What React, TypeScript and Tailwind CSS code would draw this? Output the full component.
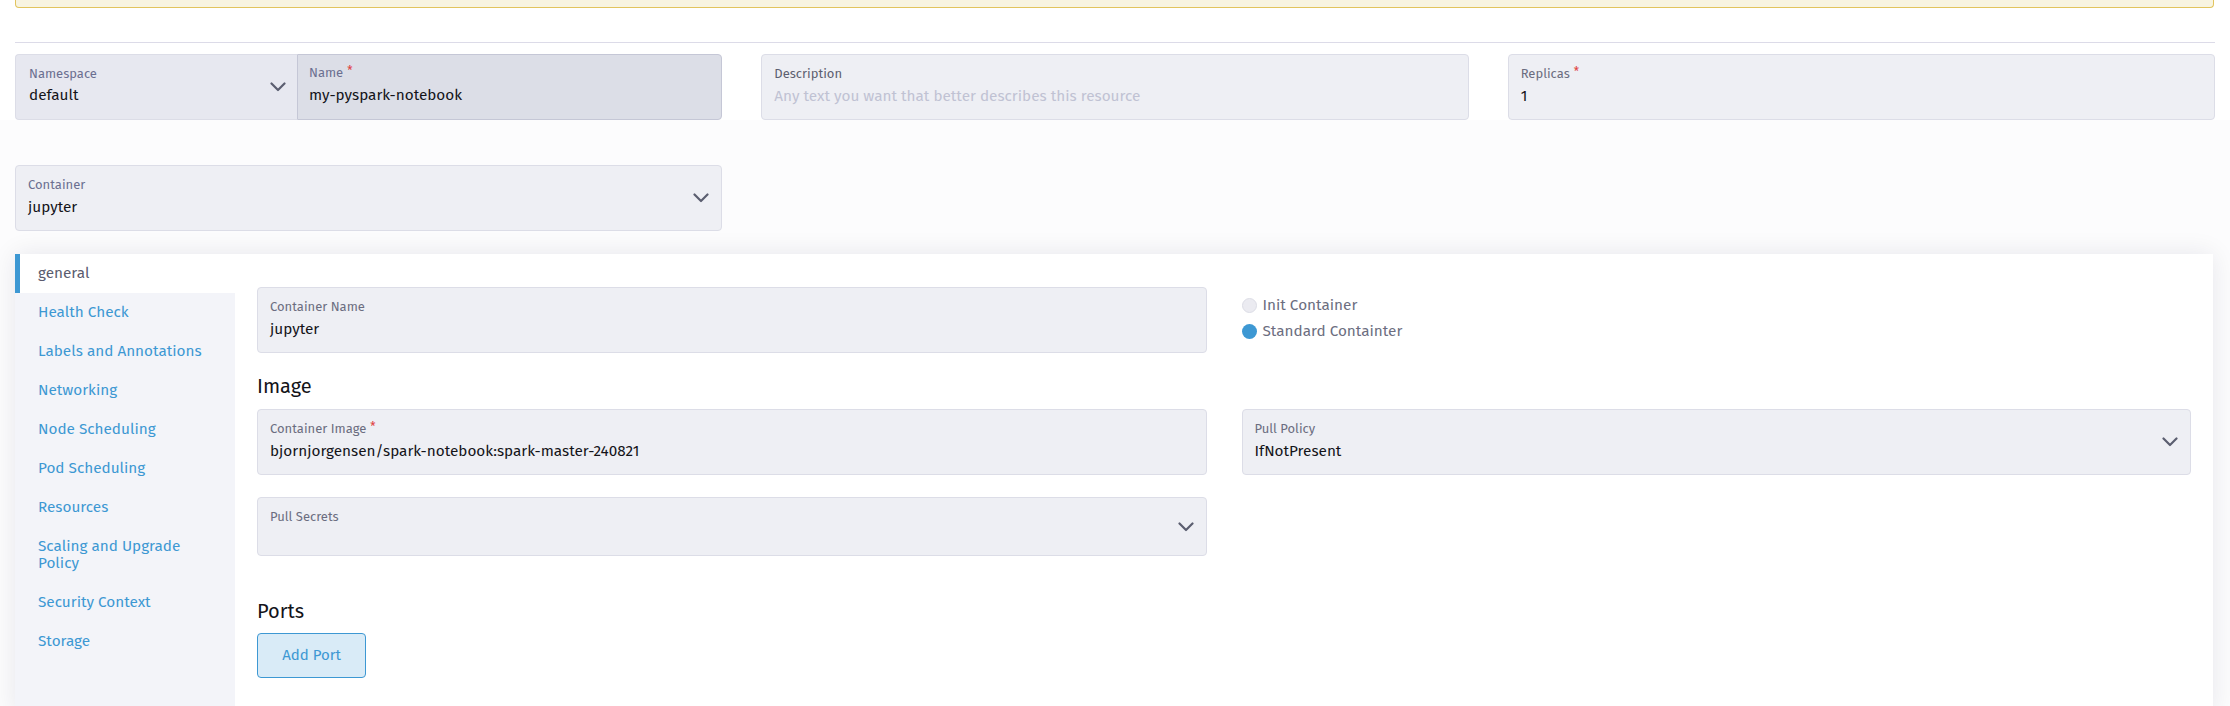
import React from "react";

const FONT = { fontFamily: '"Fira Sans", "Open Sans", "Noto Sans", sans-serif' };

function Chevron({ className = "" }: { className?: string }) {
  return (
    <svg width="16" height="10" viewBox="0 0 16 10" className={className} fill="none">
      <path d="M1.5 1.5 L8 8 L14.5 1.5" stroke="#5b5e70" strokeWidth="2.2" strokeLinecap="round" strokeLinejoin="round" />
    </svg>
  );
}

function Req() {
  return <span className="ml-[4px] text-[#e0403f] text-[12px] leading-[12px] relative top-[-2px]">*</span>;
}

function Field({
  label,
  value,
  placeholder,
  required,
  select,
  className = "",
  h = "h-[66px]",
  labelColor = "text-[#6b6d80]",
}: {
  label: string;
  value?: string;
  placeholder?: string;
  required?: boolean;
  select?: boolean;
  className?: string;
  h?: string;
  labelColor?: string;
}) {
  return (
    <div className={`relative ${h} rounded-[4px] border border-[#dcdde7] bg-[#eeeff4] pl-[12px] pt-[11px] ${className}`}>
      <div className={`text-[13px] leading-[16px] ${labelColor} flex items-center`}>
        {label}
        {required && <Req />}
      </div>
      {value !== undefined && (
        <div className="mt-[4px] text-[15.3px] leading-[20px] text-[#141419]">{value}</div>
      )}
      {placeholder !== undefined && (
        <div className="mt-[4px] text-[15.3px] leading-[20px] text-[#c0c2d3]">{placeholder}</div>
      )}
      {select && (
        <div className="absolute right-[12px] top-0 bottom-0 flex items-center">
          <Chevron />
        </div>
      )}
    </div>
  );
}

const navItems = [
  "Health Check",
  "Labels and Annotations",
  "Networking",
  "Node Scheduling",
  "Pod Scheduling",
  "Resources",
  "Scaling and Upgrade Policy",
  "Security Context",
  "Storage",
];

export default function App() {
  return (
    <div className="min-h-[706px] bg-[#fcfcfd] overflow-hidden" style={FONT}>
      {/* Top white area */}
      <div className="bg-white px-[15px] pb-0">
        <div className="h-[8px] rounded-b-[4px] border border-t-0 border-[#e2c45e] bg-[#f8f4e1] mr-[1px]" />
        <div className="mt-[34px] h-px bg-[#dcdbe8]" />
        <div className="mt-[11px] grid grid-cols-3 gap-[39px]">
          <div className="flex h-[66px]">
            <div className="relative w-[282px] rounded-l-[4px] border border-r-0 border-[#dcdde7] bg-[#e7e8f0] pl-[13px] pt-[11px]">
              <div className="text-[13px] leading-[16px] text-[#6b6f91]">Namespace</div>
              <div className="mt-[3px] text-[15.3px] leading-[20px] text-[#141419]">default</div>
              <div className="absolute right-[11px] top-0 bottom-0 flex items-center">
                <Chevron />
              </div>
            </div>
            <div className="flex-1 rounded-r-[4px] border border-[#c5c7d6] bg-[#dcdee7] pl-[11px] pt-[10px]">
              <div className="text-[13px] leading-[16px] text-[#6b6f91] flex items-center">
                Name
                <Req />
              </div>
              <div className="mt-[4px] text-[15.3px] leading-[20px] text-[#141419]">my-pyspark-notebook</div>
            </div>
          </div>
          <Field
            label="Description"
            placeholder="Any text you want that better describes this resource"
            labelColor="text-[#5d5f70]"
          />
          <Field label="Replicas" value="1" required />
        </div>
      </div>

      {/* Container select */}
      <div className="px-[15px] pt-[45px]">
        <div className="grid grid-cols-3 gap-[39px]">
          <Field label="Container" value="jupyter" select labelColor="text-[#6b6f91]" />
        </div>
      </div>

      {/* Tabbed panel */}
      <div className="ml-[15px] mr-[17px] mt-[23px] flex bg-white shadow-[0_0_24px_rgba(20,20,60,0.09)] min-h-[460px]">
        <div className="w-[220px] shrink-0 bg-[#f3f4f9]">
          <div className="border-l-[5px] border-[#3d98d3] bg-white pl-[18px] py-[11px] text-[15.3px] leading-[17px] text-[#5a5c6e]">
            general
          </div>
          {navItems.map((n) => (
            <div key={n} className="pl-[23px] pr-[20px] py-[11px] text-[15.3px] leading-[17px] text-[#3d98d3]">
              {n}
            </div>
          ))}
        </div>
        <div className="flex-1 px-[22px] pt-[33px] pb-[30px]">
          <div className="grid grid-cols-2 gap-[35px]">
            <Field label="Container Name" value="jupyter" />
            <div className="pt-[9px] flex flex-col gap-[8px]">
              <div className="flex items-center h-[18px]">
                <span className="w-[15px] h-[15px] rounded-full border border-[#dcdde6] bg-[#ebebf1]" />
                <span className="ml-[6px] text-[15.3px] leading-[18px] text-[#6c6e80]">Init Container</span>
              </div>
              <div className="flex items-center h-[18px]">
                <span className="w-[15px] h-[15px] rounded-full bg-[#3d98d3]" />
                <span className="ml-[6px] text-[15.3px] leading-[18px] text-[#6c6e80]">Standard Containter</span>
              </div>
            </div>
          </div>

          <div className="mt-[21px] text-[20px] leading-[24px] text-[#141419]">Image</div>

          <div className="mt-[11px] grid grid-cols-2 gap-[35px]">
            <Field label="Container Image" value="bjornjorgensen/spark-notebook:spark-master-240821" required />
            <Field label="Pull Policy" value="IfNotPresent" select />
          </div>

          <div className="mt-[22px] grid grid-cols-2 gap-[35px]">
            <Field label="Pull Secrets" select h="h-[59px]" />
          </div>

          <div className="mt-[43px] text-[20px] leading-[24px] text-[#141419]">Ports</div>

          <button className="mt-[10px] h-[45px] w-[109px] rounded-[4px] border border-[#3d98d3] bg-[#d9ebf7] text-[15px] text-[#3d98d3]">
            Add Port
          </button>
        </div>
      </div>
    </div>
  );
}
